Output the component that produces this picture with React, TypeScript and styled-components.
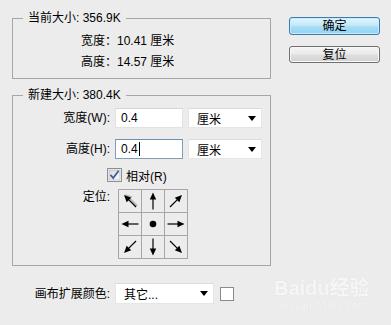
import React from 'react';
import styled, { createGlobalStyle } from 'styled-components';

const GlobalStyle = createGlobalStyle`
  body {
    margin: 0;
    background: #ececec;
    font-family: "Liberation Sans", "Noto Sans CJK SC", sans-serif;
    font-size: 12px;
    color: #000;
  }
`;

const Page = styled.div`
  position: relative;
  display: flex;
  width: 391px;
  height: 325px;
  padding-top: 10px;
  box-sizing: border-box;
  overflow: hidden;
`;

const LeftColumn = styled.div`
  display: flex;
  flex-direction: column;
  width: 259px;
  margin-left: 12px;
`;

const RightColumn = styled.div`
  display: flex;
  flex-direction: column;
  gap: 11px;
  width: 91px;
  margin-left: 18px;
  padding-top: 7px;
`;

const Group = styled.fieldset<{ $top?: number; $pb: number; $pt: number }>`
  margin: ${p => p.$top ?? 0}px 0 0 0;
  padding: ${p => p.$pt}px 0 ${p => p.$pb}px 0;
  min-width: 0;
  border: 1px solid #a6a6a6;
`;

const Legend = styled.legend`
  margin-left: 10px;
  padding: 0 5px;
  line-height: 17px;
  height: 17px;
`;

const InfoRow = styled.div`
  height: 21px;
  line-height: 21px;
  padding-left: 68px;
  white-space: pre;
`;

const FormRow = styled.div<{ $mt?: number }>`
  display: grid;
  grid-template-columns: 97px 68px 74px;
  column-gap: 5px;
  align-items: center;
  margin-top: ${p => p.$mt ?? 0}px;
`;

const Label = styled.span`
  text-align: right;
  white-space: nowrap;
  line-height: 16px;
`;

const TextField = styled.div<{ $focused?: boolean }>`
  display: flex;
  align-items: center;
  height: 20px;
  box-sizing: border-box;
  padding-left: 5px;
  background: #fff;
  border: 1px solid ${p => (p.$focused ? '#7f9db9' : '#e2e2e2')};
  border-top-color: ${p => (p.$focused ? '#6f8fb0' : '#d6d6d6')};
`;

const Caret = styled.span`
  display: inline-block;
  width: 1px;
  height: 14px;
  margin-left: 1px;
  background: #000;
`;

const Select = styled.div<{ $h?: number }>`
  display: flex;
  align-items: center;
  justify-content: space-between;
  height: ${p => p.$h ?? 20}px;
  box-sizing: border-box;
  padding: 0 5px 0 8px;
  background: #fff;
  border: 1px solid #e6e6e6;
  border-top-color: #dadada;
`;

const DropArrow = styled.span`
  width: 0;
  height: 0;
  border-left: 4.5px solid transparent;
  border-right: 4.5px solid transparent;
  border-top: 5px solid #000;
`;

const CheckRow = styled.div`
  display: flex;
  align-items: center;
  gap: 4px;
  height: 14px;
  margin-top: 9px;
  padding-left: 94px;
`;

const AnchorRow = styled.div`
  display: grid;
  grid-template-columns: 97px auto;
  column-gap: 8px;
  align-items: start;
  margin-top: 7px;
`;

const AnchorGrid = styled.div`
  display: grid;
  grid-template-columns: repeat(3, 22px);
  grid-template-rows: repeat(3, 22px);
  gap: 1px;
  width: 70px;
  box-sizing: border-box;
  border: 1px solid #a6a6a6;
  background: #a6a6a6;
`;

const AnchorCell = styled.div`
  display: flex;
  align-items: center;
  justify-content: center;
  background: #ececec;
`;

const BottomRow = styled.div`
  display: grid;
  grid-template-columns: 98px 99px 14px;
  column-gap: 5px;
  align-items: center;
  margin-top: 17px;
`;

const Swatch = styled.div`
  width: 14px;
  height: 14px;
  margin-left: 1px;
  box-sizing: border-box;
  background: #fff;
  border: 1px solid #8a8a8a;
`;

const Button = styled.div<{ $primary?: boolean }>`
  display: flex;
  align-items: center;
  justify-content: center;
  height: ${p => (p.$primary ? 18 : 17)}px;
  box-sizing: border-box;
  border-radius: 3px;
  border: 1px solid ${p => (p.$primary ? '#3d7bad' : '#707070')};
  background: ${p =>
    p.$primary
      ? 'linear-gradient(to bottom, #e3f5fd 0%, #c2e8f9 45%, #a9ddf6 55%, #8fd1f1 100%)'
      : 'linear-gradient(to bottom, #f4f4f4 0%, #ebebeb 45%, #dedede 55%, #d2d2d2 100%)'};
  box-shadow: ${p => (p.$primary ? 'inset 0 0 0 1px #c9ecfb' : 'inset 0 0 0 1px #f8f8f8')};
  line-height: 14px;
`;

// faint site watermark lying over the dialog corner
const Watermark = styled.div`
  position: absolute;
  left: 274px;
  top: 276px;
  display: flex;
  flex-direction: column;
  align-items: center;
  color: #f6f6f6;
  text-shadow: 0 0 1px #dcdcdc;
  pointer-events: none;
`;

const WatermarkLogo = styled.span`
  font-size: 20px;
  font-weight: bold;
  line-height: 24px;
`;

const WatermarkUrl = styled.span`
  font-size: 10px;
  line-height: 12px;
  letter-spacing: 0.5px;
`;

const Arrow: React.FC<{ angle: number; shade?: boolean }> = ({ angle, shade }) => (
  <svg width="22" height="22" viewBox="0 0 22 22">
    {shade && (
      <g transform={`rotate(${angle} 11 11) translate(0 1.5)`} opacity="0.35">
        <line x1="2.5" y1="11" x2="13" y2="11" stroke="#555" strokeWidth="2" />
        <polygon points="19.5,11 12.5,7.5 12.5,14.5" fill="#555" />
      </g>
    )}
    <g transform={`rotate(${angle} 11 11)`}>
      <line x1="2.5" y1="11" x2="13" y2="11" stroke="#000" strokeWidth="1.2" />
      <polygon points="19.5,11 12.5,7.8 12.5,14.2" fill="#000" />
    </g>
  </svg>
);

const CheckBox: React.FC = () => (
  <svg width="15" height="14" viewBox="0 0 15 14">
    <defs>
      <linearGradient id="cbg" x1="0" y1="0" x2="1" y2="1">
        <stop offset="0" stopColor="#d8d8d8" />
        <stop offset="1" stopColor="#fbfbfb" />
      </linearGradient>
    </defs>
    <rect x="0.5" y="0.5" width="14" height="13" fill="#fff" stroke="#8e8f8f" />
    <rect x="2" y="2" width="11" height="10" fill="url(#cbg)" stroke="#b9b9b9" strokeWidth="0.8" />
    <path d="M3.5 6.8 L6.2 10 L11.6 2.8" fill="none" stroke="#3b5fa6" strokeWidth="1.8" />
  </svg>
);

const anchors: Array<{ angle?: number; shade?: boolean }> = [
  { angle: -135, shade: true },
  { angle: -90 },
  { angle: -45 },
  { angle: 180 },
  {},
  { angle: 0 },
  { angle: 135 },
  { angle: 90 },
  { angle: 45 },
];

export default function App() {
  return (
    <>
      <GlobalStyle />
      <Page>
        <LeftColumn>
          <Group $pt={4} $pb={5}>
            <Legend>当前大小: 356.9K</Legend>
            <InfoRow>宽度：10.41 厘米</InfoRow>
            <InfoRow>高度：14.57 厘米</InfoRow>
          </Group>

          <Group $top={8} $pt={4} $pb={6}>
            <Legend>新建大小: 380.4K</Legend>
            <FormRow>
              <Label>宽度(W):</Label>
              <TextField>0.4</TextField>
              <Select>
                <span>厘米</span>
                <DropArrow />
              </Select>
            </FormRow>
            <FormRow $mt={11}>
              <Label>高度(H):</Label>
              <TextField $focused>
                0.4
                <Caret />
              </TextField>
              <Select>
                <span>厘米</span>
                <DropArrow />
              </Select>
            </FormRow>
            <CheckRow>
              <CheckBox />
              <span>相对(R)</span>
            </CheckRow>
            <AnchorRow>
              <Label>定位:</Label>
              <AnchorGrid>
                {anchors.map((a, i) => (
                  <AnchorCell key={i}>
                    {a.angle === undefined ? (
                      <svg width="8" height="8" viewBox="0 0 8 8">
                        <circle cx="4" cy="4" r="3.3" fill="#000" />
                      </svg>
                    ) : (
                      <Arrow angle={a.angle} shade={a.shade} />
                    )}
                  </AnchorCell>
                ))}
              </AnchorGrid>
            </AnchorRow>
          </Group>

          <BottomRow>
            <Label>画布扩展颜色:</Label>
            <Select $h={21}>
              <span>其它...</span>
              <DropArrow />
            </Select>
            <Swatch />
          </BottomRow>
        </LeftColumn>

        <RightColumn>
          <Button $primary>确定</Button>
          <Button>复位</Button>
        </RightColumn>

        <Watermark>
          <WatermarkLogo>Baidu经验</WatermarkLogo>
          <WatermarkUrl>jingyan.baidu.com</WatermarkUrl>
        </Watermark>
      </Page>
    </>
  );
}
